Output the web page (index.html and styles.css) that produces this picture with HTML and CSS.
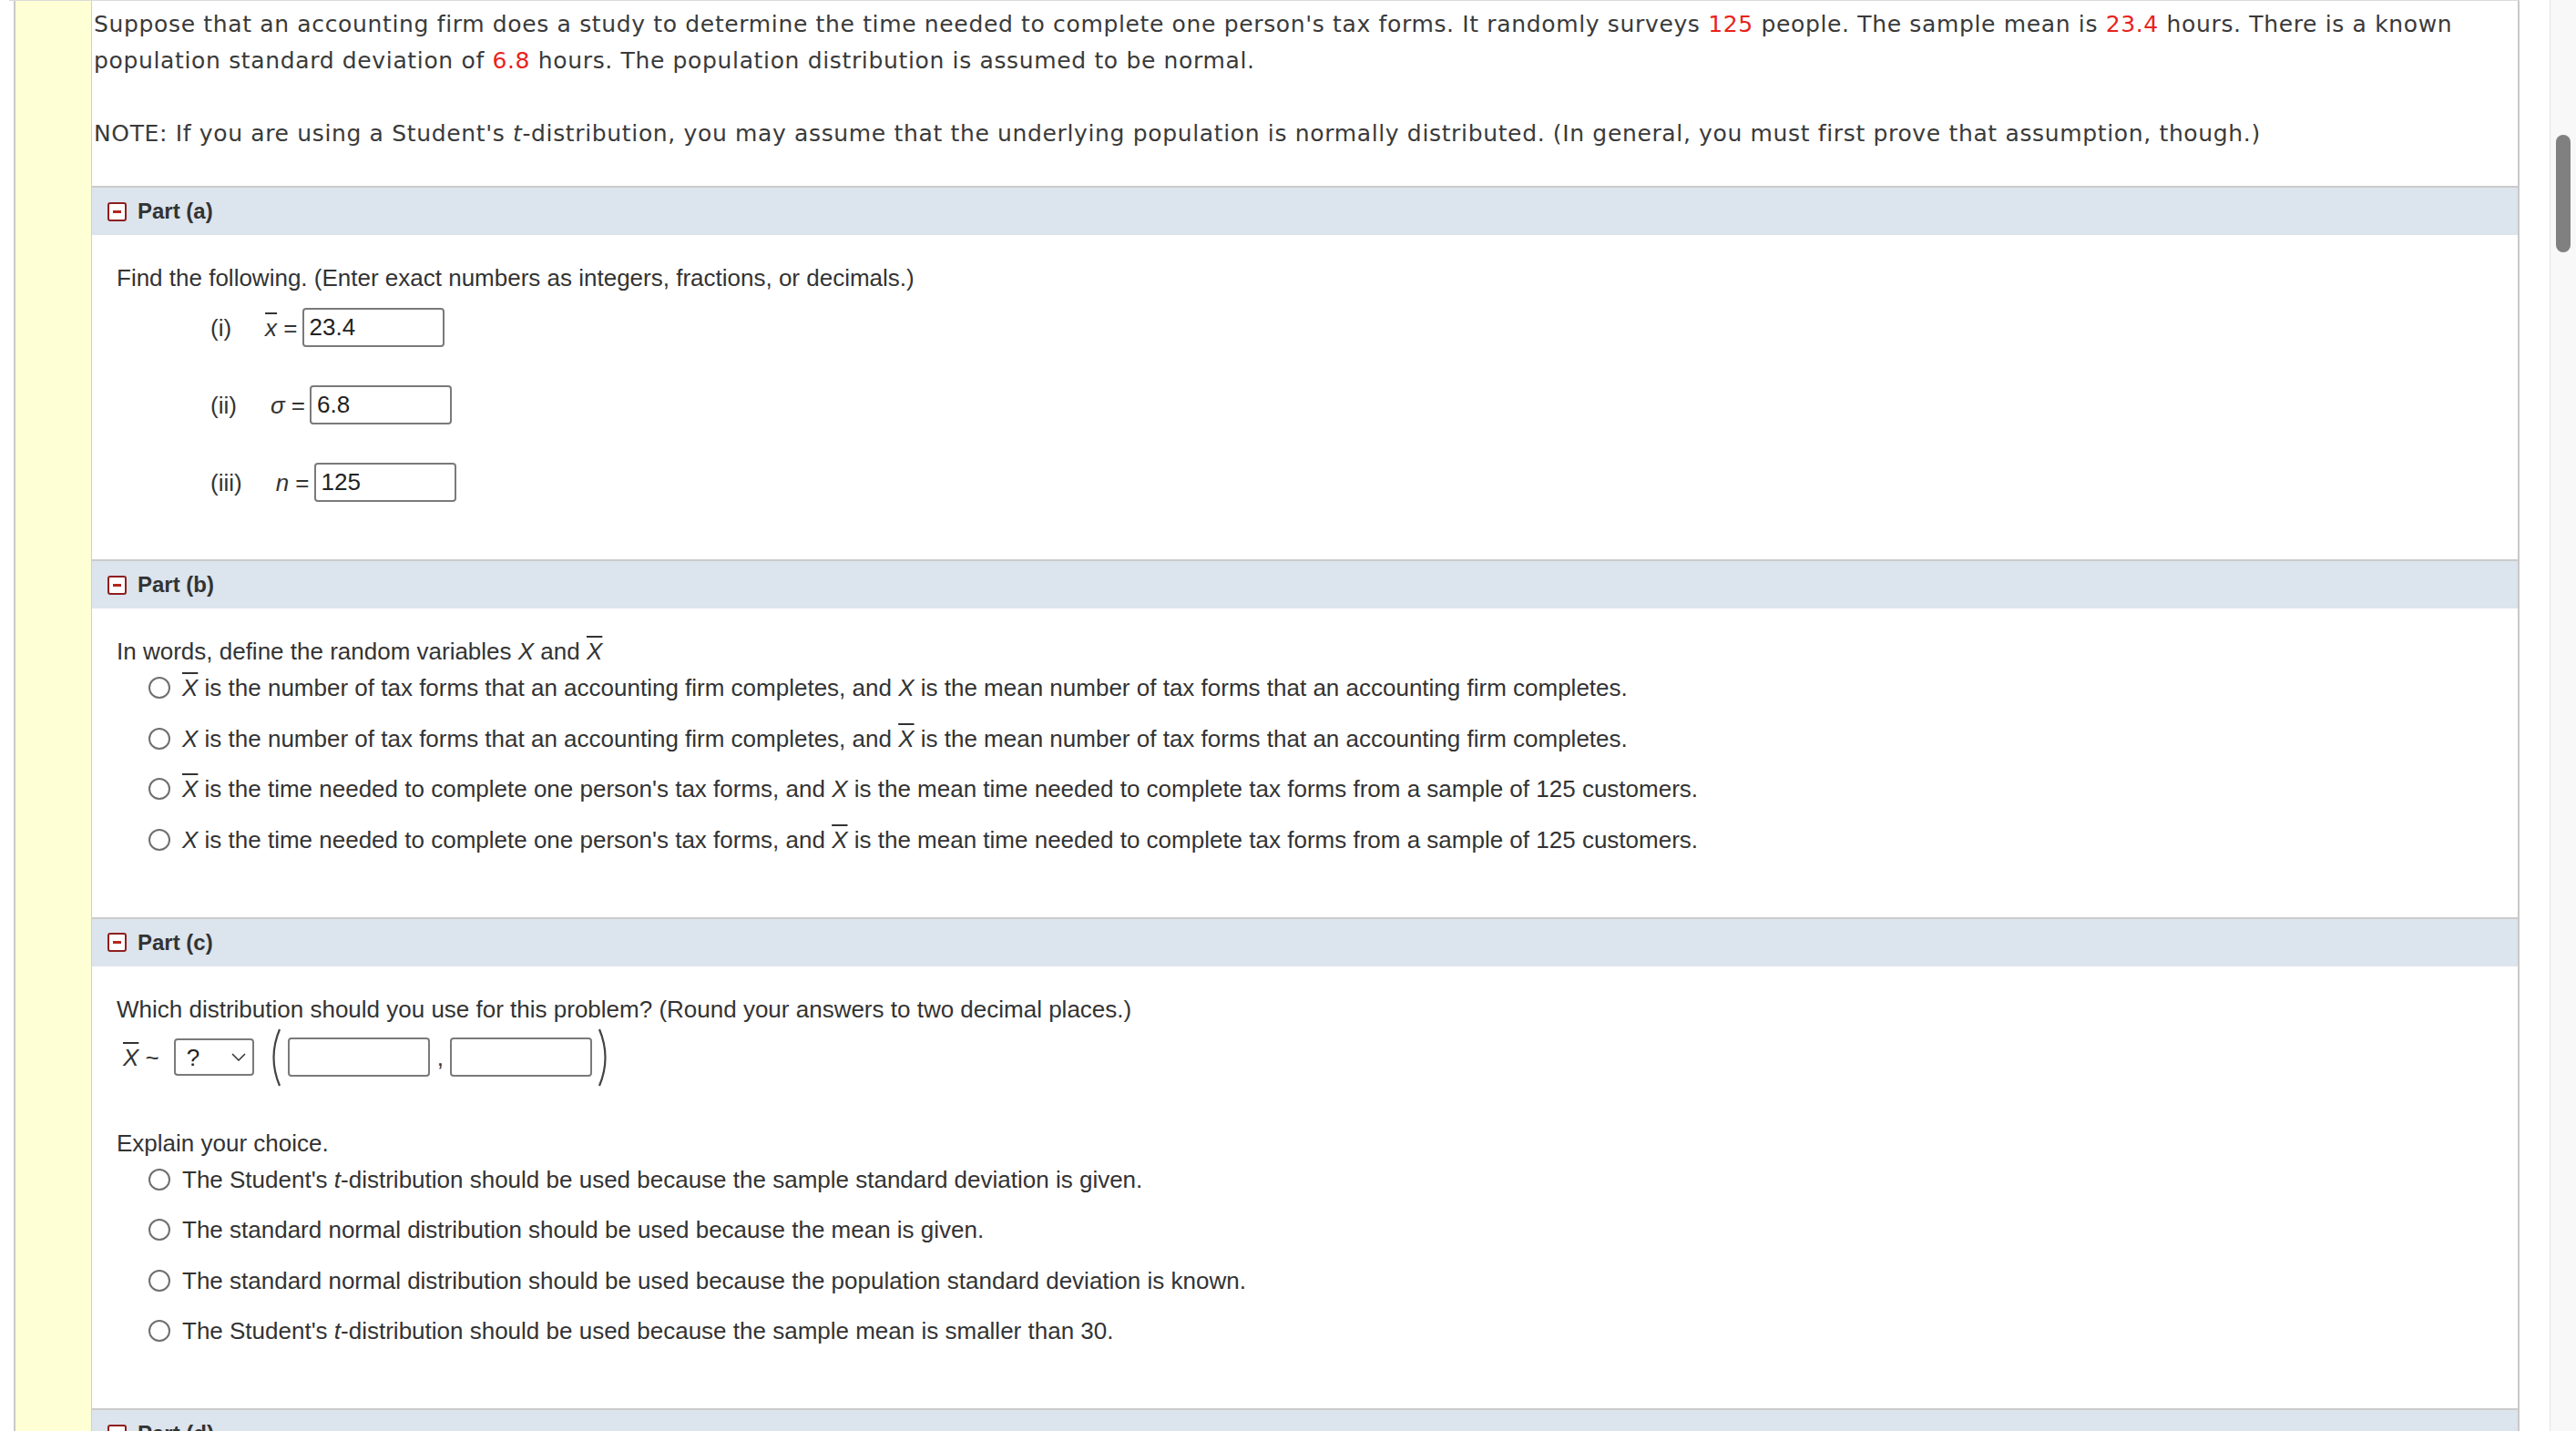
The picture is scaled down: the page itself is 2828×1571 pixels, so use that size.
FILE: index.html
```html
<!doctype html>
<html lang="en">
  <head>
    <meta charset="UTF-8" />
    <meta name="viewport" content="width=device-width, initial-scale=1.0" />
    <title>Confidence Interval Homework</title>
    <link rel="stylesheet" href="styles.css">
  </head>
  <body>
    <div class="window">
      <div class="doc">
        <div class="topbar"></div>
        <div class="sheet">
          <div class="gutter"></div>
          <div class="main">
            <div class="stem">
              <p>Suppose that an accounting firm does a study to determine the time needed to complete one person's tax forms. It randomly surveys <span class="val">125</span> people. The sample mean is <span class="val">23.4</span> hours. There is a known population standard deviation of <span class="val">6.8</span> hours. The population distribution is assumed to be normal.</p>
              <p>NOTE: If you are using a Student's <i>t</i>-distribution, you may assume that the underlying population is normally distributed. (In general, you must first prove that assumption, though.)</p>
            </div>

            <section class="part">
              <div class="part-head"><span class="toggle"></span>Part (a)</div>
              <div class="part-body">
                <p class="prompt">Find the following. (Enter exact numbers as integers, fractions, or decimals.)</p>
                <div class="answers">
                  <div class="answer">
                    <span class="num">(i)</span>
                    <span class="math"><i class="bar">x</i> =</span>
                    <input class="field" type="text" value="23.4" />
                  </div>
                  <div class="answer">
                    <span class="num">(ii)</span>
                    <span class="math"><i>σ</i> =</span>
                    <input class="field" type="text" value="6.8" />
                  </div>
                  <div class="answer">
                    <span class="num">(iii)</span>
                    <span class="math"><i>n</i> =</span>
                    <input class="field" type="text" value="125" />
                  </div>
                </div>
              </div>
            </section>

            <section class="part">
              <div class="part-head"><span class="toggle"></span>Part (b)</div>
              <div class="part-body part-choice">
                <p class="prompt">In words, define the random variables <i>X</i> and <i class="bar">X</i></p>
                <div class="options">
                  <label class="option"><input type="radio" name="pb" /><span><i class="bar">X</i> is the number of tax forms that an accounting firm completes, and <i>X</i> is the mean number of tax forms that an accounting firm completes.</span></label>
                  <label class="option"><input type="radio" name="pb" /><span><i>X</i> is the number of tax forms that an accounting firm completes, and <i class="bar">X</i> is the mean number of tax forms that an accounting firm completes.</span></label>
                  <label class="option"><input type="radio" name="pb" /><span><i class="bar">X</i> is the time needed to complete one person's tax forms, and <i>X</i> is the mean time needed to complete tax forms from a sample of 125 customers.</span></label>
                  <label class="option"><input type="radio" name="pb" /><span><i>X</i> is the time needed to complete one person's tax forms, and <i class="bar">X</i> is the mean time needed to complete tax forms from a sample of 125 customers.</span></label>
                </div>
              </div>
            </section>

            <section class="part">
              <div class="part-head"><span class="toggle"></span>Part (c)</div>
              <div class="part-body part-choice">
                <p class="prompt">Which distribution should you use for this problem? (Round your answers to two decimal places.)</p>
                <div class="dist">
                  <span class="dist-var"><i class="bar">X</i> ~</span>
                  <span class="select">?
                    <svg class="chevron" width="16" height="9" viewBox="0 0 16 9"><path d="M1 1 L8 8 L15 1" fill="none" stroke="#333" stroke-width="1.5"/></svg>
                  </span>
                  <svg class="paren" width="16" height="64" viewBox="0 0 16 64"><path d="M14 1 Q1 32 14 63" fill="none" stroke="#444" stroke-width="2.2"/></svg>
                  <input class="field" type="text" />
                  <span class="comma">,</span>
                  <input class="field" type="text" />
                  <svg class="paren" width="16" height="64" viewBox="0 0 16 64"><path d="M2 1 Q15 32 2 63" fill="none" stroke="#444" stroke-width="2.2"/></svg>
                </div>
                <p class="prompt explain">Explain your choice.</p>
                <div class="options">
                  <label class="option"><input type="radio" name="pc" /><span>The Student's <i>t</i>-distribution should be used because the sample standard deviation is given.</span></label>
                  <label class="option"><input type="radio" name="pc" /><span>The standard normal distribution should be used because the mean is given.</span></label>
                  <label class="option"><input type="radio" name="pc" /><span>The standard normal distribution should be used because the population standard deviation is known.</span></label>
                  <label class="option"><input type="radio" name="pc" /><span>The Student's <i>t</i>-distribution should be used because the sample mean is smaller than 30.</span></label>
                </div>
              </div>
            </section>

            <section class="part">
              <div class="part-head"><span class="toggle"></span>Part (d)</div>
            </section>
          </div>
        </div>
      </div>
      <div class="scrollbar"><div class="thumb"></div></div>
    </div>
  </body>
</html>
```

FILE: styles.css
```css
html,
body {
  margin: 0;
  height: 1571px;
  overflow: hidden;
  background: white;
}

body {
  font-family: "Liberation Sans", Arial, sans-serif;
  color: #333;
}

.window {
  display: flex;
  height: 100%;
}

.doc {
  width: 2756px;
  margin-left: 10px;
  display: flex;
  flex-direction: column;
}

.topbar {
  height: 3px;
  border: 1px solid #dadada;
  border-top: 0;
  border-radius: 0 0 6px 6px;
  background: #f4f4f4;
}

.sheet {
  flex: 1;
  display: flex;
  margin-left: 5px;
}

.gutter {
  width: 83px;
  background: #ffffd5;
  border-left: 2px solid #c9c9c9;
  border-right: 1px solid #cfcfcf;
}

.main {
  flex: 1;
  border-right: 2px solid #c9c9c9;
}

/* problem statement */
.stem {
  padding: 6px 60px 37px 2px;
  font-family: "DejaVu Sans", Verdana, sans-serif;
  font-size: 25px;
  letter-spacing: 0.65px;
  line-height: 40px;
  color: #3a3a3a;
}

.stem p {
  margin: 0;
}

.stem p + p {
  margin-top: 40px;
}

.val {
  color: #e8231b;
}

/* parts */
.part-head {
  display: flex;
  align-items: center;
  gap: 12px;
  height: 52px;
  padding-left: 17px;
  border-top: 2px solid #cbcbcb;
  background: #dce4ed;
  font-size: 24px;
  font-weight: bold;
  color: #333;
}

.toggle {
  position: relative;
  box-sizing: border-box;
  width: 21px;
  height: 21px;
  border: 2px solid #8e1f1f;
  border-radius: 3px;
  background: white;
}

.toggle::after {
  content: "";
  position: absolute;
  left: 4px;
  top: 7px;
  width: 9px;
  height: 3px;
  background: #b3261e;
}

.part-body {
  padding: 32px 40px 63px 27px;
  font-size: 26px;
  line-height: 30px;
}

.part-body.part-choice {
  padding-bottom: 70px;
}

.prompt {
  margin: 0;
}

.bar {
  text-decoration: overline;
  text-decoration-thickness: 2px;
}

.field {
  box-sizing: border-box;
  width: 156px;
  height: 43px;
  padding: 0 6px;
  border: 2px solid #7a7a7a;
  border-radius: 4px;
  font: 26px "Liberation Sans", Arial, sans-serif;
  color: #222;
  background: white;
}

/* part (a) */
.answers {
  display: flex;
  flex-direction: column;
  gap: 42px;
  margin-top: 18px;
  padding-left: 103px;
}

.answer {
  display: flex;
  align-items: center;
}

.num {
  margin-right: 37px;
}

.math {
  margin-right: 5px;
}

/* radio lists */
.options {
  display: flex;
  flex-direction: column;
  gap: 25.5px;
  margin-top: 10px;
  padding-left: 35px;
}

.option {
  display: flex;
  align-items: center;
  gap: 13px;
}

.option input[type='radio'] {
  appearance: none;
  box-sizing: border-box;
  width: 24px;
  height: 24px;
  margin: 0;
  border: 2px solid #6f6f6f;
  border-radius: 50%;
  background: white;
}

/* part (c) */
.dist {
  display: flex;
  align-items: center;
  height: 64px;
  margin-top: 6px;
  padding-left: 7px;
}

.dist-var {
  margin-right: 16px;
}

.select {
  box-sizing: border-box;
  display: flex;
  align-items: center;
  justify-content: space-between;
  width: 88px;
  height: 41px;
  padding: 0 7px 0 12px;
  border: 2px solid #7a7a7a;
  border-radius: 4px;
  color: #222;
}

.paren {
  margin: 0 7px 0 14px;
}

.paren:last-child {
  margin: 0 0 0 6px;
}

.comma {
  margin: 0 7px 0 8px;
}

.explain {
  margin-top: 47px;
}

/* fake scrollbar */
.scrollbar {
  width: 28px;
  margin-left: auto;
  border-left: 1px solid #e4e4e4;
  background: #f8f8f8;
}

.thumb {
  width: 16px;
  height: 129px;
  margin: 148px 0 0 6px;
  border-radius: 8px;
  background: #808080;
}
```
